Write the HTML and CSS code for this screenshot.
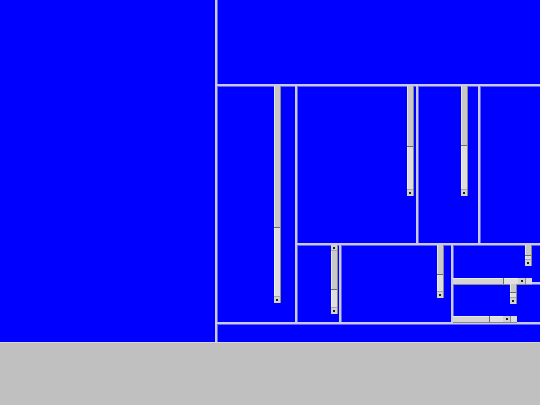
FILE: index.html
```html
<!DOCTYPE html>
<html>
<head>
<meta charset="utf-8">
<link rel="stylesheet" href="styles.css">
</head>
<body>
<div class="screen">
  <div class="desk">
    <div class="pane left"></div>
    <div class="vdiv"></div>
    <div class="right">
      <div class="pane top"></div>
      <div class="hdiv"></div>
      <div class="middle">
        <div class="pane colA">
          <div class="vsb sbA">
            <div class="thumb" style="height:141px"></div>
            <div class="track"></div>
            <div class="btn"></div>
          </div>
        </div>
        <div class="vdiv"></div>
        <div class="colB">
          <div class="upper">
            <div class="pane b1">
              <div class="vsb sbB1">
                <div class="thumb" style="height:60px"></div>
                <div class="track"></div>
                <div class="btn"></div>
              </div>
            </div>
            <div class="vdiv"></div>
            <div class="pane b2">
              <div class="vsb sbB2">
                <div class="thumb" style="height:59px"></div>
                <div class="track"></div>
                <div class="btn"></div>
              </div>
            </div>
            <div class="vdiv"></div>
            <div class="pane b3"></div>
          </div>
          <div class="hdiv"></div>
          <div class="lower">
            <div class="pane c1">
              <div class="vsb sbC1">
                <div class="btn up"></div>
                <div class="thumb" style="height:38px"></div>
                <div class="track"></div>
                <div class="btn"></div>
              </div>
            </div>
            <div class="vdiv"></div>
            <div class="pane c2">
              <div class="vsb sbC2">
                <div class="thumb" style="height:29px"></div>
                <div class="track"></div>
                <div class="btn"></div>
              </div>
            </div>
            <div class="vdiv"></div>
            <div class="c3">
              <div class="pane c3u">
                <div class="vsb sbC3u">
                  <div class="thumb" style="height:10px"></div>
                  <div class="track"></div>
                  <div class="btn"></div>
                </div>
                <div class="hsb hsb1">
                  <div class="hthumb" style="width:50px"></div>
                  <div class="htrack"></div>
                  <div class="hbtn"></div>
                  <div class="hend"></div>
                </div>
              </div>
              <div class="hdiv"></div>
              <div class="pane c3l">
                <div class="vsb sbC3l">
                  <div class="thumb" style="height:8px"></div>
                  <div class="track"></div>
                  <div class="btn"></div>
                </div>
                <div class="hsb hsb2">
                  <div class="hthumb" style="width:36px"></div>
                  <div class="htrack"></div>
                  <div class="hbtn"></div>
                  <div class="hend"></div>
                </div>
              </div>
            </div>
          </div>
        </div>
      </div>
      <div class="hdiv"></div>
      <div class="pane bottom"></div>
    </div>
  </div>
  <div class="gray"></div>
</div>
</body>
</html>
```

FILE: styles.css
```css
html, body {
  margin: 0;
  padding: 0;
  background: #c0c0c0;
  font-family: "Liberation Sans", sans-serif;
}
.screen {
  width: 540px;
  height: 405px;
  display: flex;
  flex-direction: column;
  overflow: hidden;
}
.desk {
  height: 342px;
  display: flex;
  background: #0000ff;
  flex: none;
}
.gray {
  flex: 1;
  background: #c0c0c0;
  border-top: 1px solid #d6d6d6;
}
.pane {
  display: flex;
  flex-direction: column;
  align-items: flex-start;
  min-width: 0;
  min-height: 0;
}
.vdiv {
  width: 2px;
  flex: none;
  background: #c8c8f0;
  box-shadow: 1px 0 0 #6464e6;
}
.hdiv {
  height: 2px;
  flex: none;
  background: #c8c8f0;
  box-shadow: 0 1px 0 #6464e6;
}
.left { width: 215px; flex: none; }
.right {
  width: 323px;
  flex: none;
  display: flex;
  flex-direction: column;
}
.top { height: 84px; flex: none; }
.middle {
  height: 236px;
  flex: none;
  display: flex;
}
.bottom { flex: 1; }
.colA { width: 78px; flex: none; }
.colB {
  flex: 1;
  display: flex;
  flex-direction: column;
}
.upper {
  height: 157px;
  flex: none;
  display: flex;
}
.b1 { width: 119px; flex: none; }
.b2 { width: 60px; flex: none; }
.b3 { flex: 1; }
.lower {
  flex: 1;
  display: flex;
}
.c1 { width: 42px; flex: none; }
.c2 { width: 110px; flex: none; }
.c3 {
  flex: 1;
  display: flex;
  flex-direction: column;
}
.c3u { height: 37px; flex: none; }
.c3l { flex: 1; }

/* vertical scrollbar */
.vsb {
  position: relative;
  width: 6px;
  border-right: 1px solid #8a8a8a;
  display: flex;
  flex-direction: column;
  flex: none;
}
.thumb {
  background: #c8c8c8;
  border-bottom: 1px solid #6c6c6c;
  box-shadow: inset 1px 0 0 #e8e8e8;
  flex: none;
}
.track {
  flex: 1;
  background: #dedede;
  box-shadow: inset 1px 0 0 #f2f2f2;
}
.btn {
  height: 7px;
  flex: none;
  background: #d2d2d2;
  border-top: 1px solid #a8a8a8;
  box-sizing: border-box;
  display: flex;
  align-items: center;
  justify-content: center;
}
.btn::after {
  content: "";
  width: 2px;
  height: 2px;
  background: #202020;
}
.btn.up {
  height: 6px;
  border-top: none;
  border-bottom: 1px solid #a8a8a8;
}
.sbA { margin-left: 57px; height: 217px; }
.sbB1 { margin-left: 110px; height: 110px; }
.sbB2 { margin-left: 43px; height: 110px; }
.sbC1 { margin-left: 34px; height: 69px; }
.sbC2 { margin-left: 96px; height: 53px; }
.sbC3u { margin-left: 72px; height: 21px; }
.sbC3l { margin-left: 57px; height: 20px; }

/* horizontal scrollbar */
.hsb {
  position: relative;
  height: 6px;
  border-bottom: 1px solid #8a8a8a;
  display: flex;
  flex: none;
  margin-top: auto;
}
.hthumb {
  flex: none;
  background: #d4d4d4;
  border-right: 1px solid #6c6c6c;
  box-shadow: inset 0 1px 0 #ececec;
}
.htrack {
  flex: 1;
  background: #e0e0e0;
  box-shadow: inset 0 1px 0 #f2f2f2;
}
.hbtn {
  width: 7px;
  flex: none;
  background: #d2d2d2;
  display: flex;
  align-items: center;
  justify-content: center;
}
.hbtn::after {
  content: "";
  width: 2px;
  height: 2px;
  background: #202020;
}
.hend {
  width: 6px;
  flex: none;
  background: #dcdcdc;
  border-left: 1px solid #8a8a8a;
}
.hsb1 { width: 79px; margin-bottom: -3px; }
.hsb2 { width: 64px; margin-bottom: -1px; }
```
